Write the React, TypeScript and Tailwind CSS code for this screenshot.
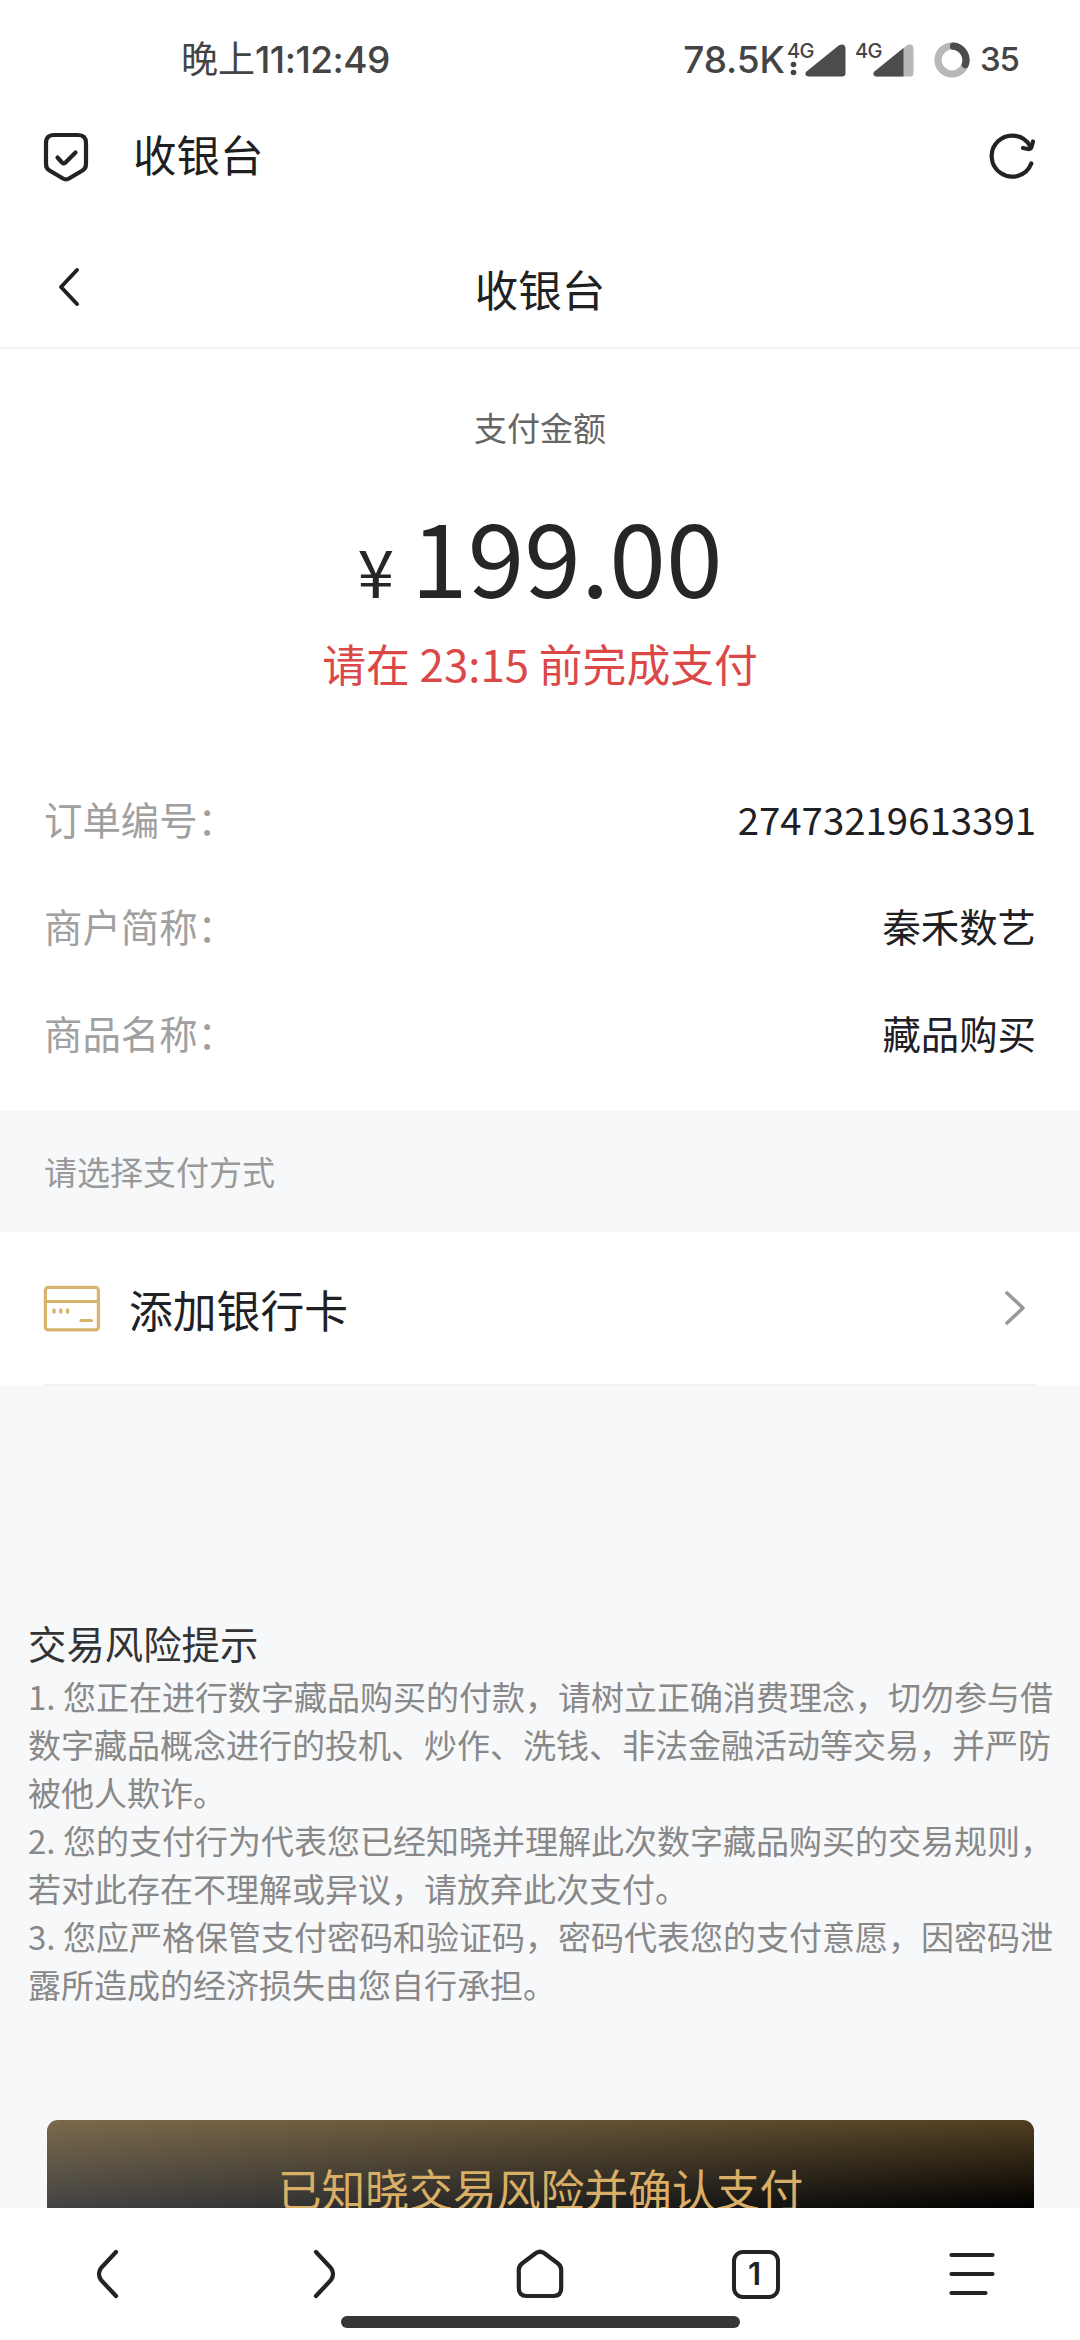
import React from "react";

const orderInfo = [
  { label: "订单编号：", value: "27473219613391" },
  { label: "商户简称：", value: "秦禾数艺" },
  { label: "商品名称：", value: "藏品购买" },
];

const riskTips = [
  "1. 您正在进行数字藏品购买的付款，请树立正确消费理念，切勿参与借数字藏品概念进行的投机、炒作、洗钱、非法金融活动等交易，并严防被他人欺诈。",
  "2. 您的支付行为代表您已经知晓并理解此次数字藏品购买的交易规则，若对此存在不理解或异议，请放弃此次支付。",
  "3. 您应严格保管支付密码和验证码，密码代表您的支付意愿，因密码泄露所造成的经济损失由您自行承担。",
];

const Signal = ({ weak = false }: { weak?: boolean }) => (
  <div className="relative h-[34px] w-[60px]">
    <span className="absolute left-0 top-0 text-[20px] leading-[16px] tracking-tight">
      4G
    </span>
    <svg className="absolute left-[18px] top-px" width="41" height="33" viewBox="0 0 41 33">
      <path
        d="M1.5 27.5 34 1.2Q40.5-1.5 40.5 5V29Q40.5 32.5 37 32.5H3Q-1.5 31 1.5 27.5Z"
        fill={weak ? "#b8b8b8" : "#4c4c4c"}
      />
      {weak && (
        <path d="M1.5 27.5 30.5 4V32.5H3Q-1.5 31 1.5 27.5Z" fill="#4c4c4c" />
      )}
    </svg>
  </div>
);

const StatusBar = () => (
  <div className="flex h-[108px] items-center justify-between pl-[181px] pr-[61px] pt-[11px] text-[#444] font-medium font-[Inter,'Noto_Sans_CJK_SC',sans-serif]">
    <div className="flex items-center text-[37px]">
      <span className="font-normal">晚上</span>
      <span className="tracking-[-0.5px]">11:12:49</span>
    </div>
    <div className="flex items-center">
      <span className="text-[37px] tracking-[-0.1px]">78.5K</span>
      <div className="relative ml-[2px] flex gap-[8px]">
        <Signal />
        <Signal weak />
        <svg className="absolute left-[3px] top-[18px]" width="7" height="15" viewBox="0 0 7 15">
          <circle cx="3.5" cy="3.5" r="2.8" fill="#444" />
          <circle cx="3.5" cy="11.5" r="2.8" fill="#444" />
        </svg>
      </div>
      <svg className="ml-[19px]" width="36" height="36" viewBox="0 0 36 36" fill="none" strokeWidth="7.2">
        <circle cx="18" cy="18" r="14" stroke="#b8b8b8" />
        <path d="M19.5 4.1A14 14 0 0 1 31.2 22.6" stroke="#4c4c4c" strokeLinecap="round" />
      </svg>
      <span className="ml-[10px] text-[33px] tracking-[-1px]">35</span>
    </div>
  </div>
);

const BrowserBar = () => (
  <div className="flex h-[98px] items-center justify-between pl-[42px] pr-[43px] text-[#1f1f1f]">
    <div className="flex items-center">
      <svg width="48" height="52" viewBox="0 0 48 52" fill="none" stroke="#232323" strokeWidth="4.2" strokeLinecap="round" strokeLinejoin="round">
        <path d="M12 4H36Q44 4 44 12V33Q44 37.5 40.5 39.5L27 47.5Q24 49.2 21 47.5L7.5 39.5Q4 37.5 4 33V12Q4 4 12 4Z" />
        <path d="M15.5 26.5 20 31.5Q21.7 33.2 23.5 31.5L33.5 21.5" />
      </svg>
      <h1 className="-mt-[6px] ml-[43px] text-[43.5px] leading-none">收银台</h1>
    </div>
    <svg className="-mt-[4px]" width="50" height="50" viewBox="0 0 50 50" fill="none" stroke="#232323" strokeWidth="4.2" strokeLinecap="round" strokeLinejoin="round">
      <path d="M44.3 33.5A20.5 20.5 0 1 1 43 16" />
      <path d="M36 18 41 19Q43.8 19.3 44.5 17L46 11.500" />
    </svg>
  </div>
);

const Header = () => (
  <header className="grid h-[143px] grid-cols-3 items-center border-b-2 border-[#f2f2f2] px-[56px] pt-[25px]">
    <svg className="-mt-[5px]" width="26" height="42" viewBox="0 0 26 42" fill="none" stroke="#202125" strokeWidth="4" strokeLinecap="round" strokeLinejoin="round">
      <path d="M21 4 5 21 21 38" />
    </svg>
    <h2 className="text-center text-[43.5px] leading-none text-[#202125]">收银台</h2>
  </header>
);

const BottomNav = () => (
  <nav className="h-[132px] shrink-0 bg-white">
    <div className="grid h-[108px] grid-cols-5 place-items-center pt-[24px]">
      <svg width="52" height="52" viewBox="0 0 52 52" fill="none" stroke="#232323" strokeWidth="4.2" strokeLinecap="round">
        <path d="M34 4 19 20Q15 26 19 32L34 48" />
      </svg>
      <svg width="52" height="52" viewBox="0 0 52 52" fill="none" stroke="#232323" strokeWidth="4.2" strokeLinecap="round">
        <path d="M18 4 33 20Q37 26 33 32L18 48" />
      </svg>
      <svg width="52" height="52" viewBox="0 0 52 52" fill="none" stroke="#232323" strokeWidth="4.2" strokeLinejoin="round">
        <path d="M22 5Q26 2.5 30 5L44 15.5Q47.2 18 47.2 22V40Q47.2 48 39.5 48H12.5Q4.8 48 4.8 40V22Q4.8 18 8 15.5Z" />
      </svg>
      <div className="flex h-[49px] w-[48px] items-center justify-center rounded-[11px] border-4 border-[#232323] font-[Inter,sans-serif] text-[31px] font-semibold leading-none text-[#232323]">
        <span className="-ml-[3px] -mt-[2px]">1</span>
      </div>
      <svg width="52" height="52" viewBox="0 0 52 52" fill="none" stroke="#232323" strokeWidth="4.2" strokeLinecap="round">
        <path d="M5.5 7H46.5M5.5 26H46.5M5.5 45H39.5" />
      </svg>
    </div>
    <div className="mx-auto h-[12px] w-[399px] rounded-full bg-[#363636]" />
  </nav>
);

const App = () => {
  return (
    <div className="flex h-[2340px] w-[1080px] flex-col overflow-hidden bg-[#f7f8fa] font-['Noto_Sans_CJK_SC',sans-serif]">
      <div className="bg-white">
        <StatusBar />
        <BrowserBar />
        <Header />
      </div>

      <section className="h-[762px] bg-white pt-[54px]">
        <p className="text-center text-[33px] leading-[48px] text-[#666]">支付金额</p>
        <div className="mt-[41px] flex items-baseline justify-center gap-[17px] leading-[124px] text-[#262626]">
          <span className="text-[66px]">¥</span>
          <span className="text-[102px]">199.00</span>
        </div>
        <p className="text-center text-[43.8px] leading-[64px] text-[#db4848]">
          请在 23:15 前完成支付
        </p>
        <ul className="mt-[70px] px-[44px]">
          {orderInfo.map((item) => (
            <li key={item.label} className="flex h-[107px] items-center justify-between text-[38.4px]">
              <span className="text-[#a0a0a0]">{item.label}</span>
              <span className="text-[#1f2024]">{item.value}</span>
            </li>
          ))}
        </ul>
      </section>

      <p className="flex h-[121px] items-center px-[44px] text-[33px] text-[#999]">
        请选择支付方式
      </p>

      <section className="bg-white px-[43px]">
        <div className="flex h-[154px] items-center border-b-2 border-[#f0f1f3] pt-[2px]">
          <svg width="58" height="48" viewBox="0 0 58 48" fill="none" stroke="#d8b36e" strokeWidth="3.2" strokeLinecap="round">
            <rect x="2.4" y="2.4" width="53" height="42.5" rx="3" />
            <path d="M2.4 16.5H55.4M38 35.5H48.5" />
            <path d="M11 25V27M17.8 25V27M24.6 25V27" strokeWidth="3.4" />
          </svg>
          <span className="ml-[28px] mt-[2px] text-[43.8px] text-[#202125]">添加银行卡</span>
          <svg className="ml-auto mr-[11px]" width="22" height="38" viewBox="0 0 22 38" fill="none" stroke="#999" strokeWidth="3.6" strokeLinecap="round" strokeLinejoin="round">
            <path d="M3 3 19 18 3 33" />
          </svg>
        </div>
      </section>

      <section className="flex min-h-0 flex-1 flex-col overflow-hidden pt-[227px]">
        <div className="px-[28px]">
          <h3 className="text-[38.4px] leading-[59px] text-[#333]">交易风险提示</h3>
          {riskTips.map((tip) => (
            <p key={tip} className="-mr-[4px] text-[33px] leading-[48px] text-[#888]">
              {tip}
            </p>
          ))}
        </div>
        <button className="ml-[47px] mr-[46px] mt-[112px] h-[138px] shrink-0 rounded-[11px] bg-[linear-gradient(180deg,rgba(214,168,88,0.38),rgba(214,168,88,0)_64%),linear-gradient(90deg,#434343,#000)] text-[43.8px] text-[#d9ae66]">
          已知晓交易风险并确认支付
        </button>
      </section>

      <BottomNav />
    </div>
  );
};

export default App;
